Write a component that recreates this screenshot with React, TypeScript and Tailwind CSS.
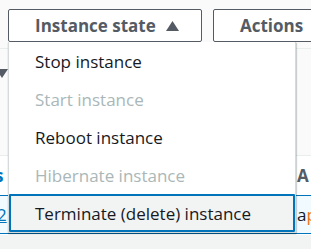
import React from 'react';

const items = [
    { label: 'Stop instance', disabled: false },
    { label: 'Start instance', disabled: true },
    { label: 'Reboot instance', disabled: false },
    { label: 'Hibernate instance', disabled: true },
    { label: 'Terminate (delete) instance', disabled: false, active: true },
];

function App() {
    return (
        <div className="relative w-[311px] h-[249px] overflow-hidden bg-[#f2f3f3] font-['Open_Sans',sans-serif]">
            {/* table panel behind the menu */}
            <div className="h-[235px] bg-white">
                <div className="flex gap-[11px] pl-[8px] pt-[9px] bg-[#fafafa] h-[48px]">
                    <button className="shrink-0 flex items-center h-[33px] w-[194px] pl-[26px] border border-[#545b64] rounded-[2px] bg-white text-[17px] font-bold text-[#545b64]">
                        Instance state
                        <svg className="ml-[10px]" width="13" height="10" viewBox="0 0 13 10">
                            <path d="M6.5 0L13 10H0z" fill="#545b64" />
                        </svg>
                    </button>
                    <button className="shrink-0 flex items-center h-[33px] w-[120px] pl-[26px] border border-[#545b64] rounded-[2px] bg-white text-[17px] font-bold text-[#545b64]">
                        Actions
                    </button>
                </div>
                <div className="border-t border-[#eaeded] h-[107px] flex items-start pt-[20px] bg-[#fafafa]">
                    <svg width="8" height="10" viewBox="0 0 8 10">
                        <path d="M-4 0H8L2 9z" fill="#545b64" />
                    </svg>
                </div>
                <div className="border-t border-[#eaeded] h-[40px] grid grid-cols-[8px_1fr_14px] items-center text-[17px]">
                    <span className="ml-[-5px] text-[#0073bb] font-bold">s</span>
                    <span />
                    <span className="text-[#545b64] font-bold">A</span>
                </div>
                <div className="border-y border-[#0073bb] h-[39px] bg-[#f1faff] grid grid-cols-[8px_1fr_14px] items-center text-[17px]">
                    <span className="ml-[-3px] text-[#0073bb] underline">2</span>
                    <span />
                    <span className="text-[#16191f] whitespace-nowrap">a<span className="text-[#ec7211]">p</span></span>
                </div>
            </div>

            {/* dropdown menu */}
            <div className="absolute left-[8px] top-[42px] w-[288px] bg-white border border-[#d5dbdb] border-t-0 shadow-[0_1px_1px_rgba(0,28,36,0.3),1px_1px_1px_rgba(0,28,36,0.15)]">
                {items.map((item) => (
                    <div
                        key={item.label}
                        className={
                            item.active
                                ? 'h-[38px] flex items-center pl-[24px] pt-[1px] text-[17px] text-[#16191f] bg-[#f2f3f3] border-2 border-[#0073bb] rounded-[1px]'
                                : item.disabled
                                ? 'h-[38px] flex items-center pl-[26px] pt-[1px] text-[17px] text-[#aab7b8]'
                                : 'h-[38px] flex items-center pl-[26px] pt-[1px] text-[17px] text-[#16191f]'
                        }
                    >
                        {item.label}
                    </div>
                ))}
            </div>
        </div>
    );
}

export default App;
